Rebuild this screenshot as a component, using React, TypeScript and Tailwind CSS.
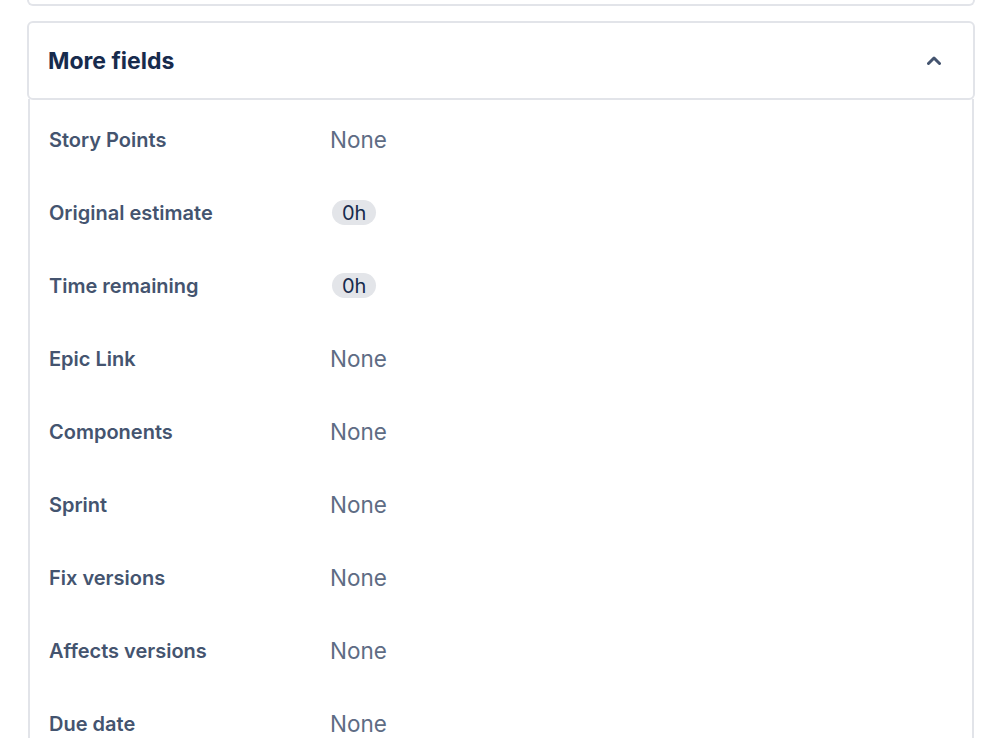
import React from 'react';

type Field = { label: string; value: string; badge?: boolean };

const fields: Field[] = [
	{ label: 'Story Points', value: 'None' },
	{ label: 'Original estimate', value: '0h', badge: true },
	{ label: 'Time remaining', value: '0h', badge: true },
	{ label: 'Epic Link', value: 'None' },
	{ label: 'Components', value: 'None' },
	{ label: 'Sprint', value: 'None' },
	{ label: 'Fix versions', value: 'None' },
	{ label: 'Affects versions', value: 'None' },
	{ label: 'Due date', value: 'None' },
];

function FieldRow({ label, value, badge }: Field) {
	return (
		<div className="flex items-center h-[73px] px-[19px]">
			<div className="w-[281px] text-[20px] font-semibold text-[#44546f]">{label}</div>
			{badge ? (
				<span className="ml-[2px] inline-flex items-center justify-center h-[25px] px-[10px] rounded-full bg-[#e3e5e9] text-[20px] text-[#172b4d]">
					{value}
				</span>
			) : (
				<span className="text-[22.5px] text-[#5e6c84]">{value}</span>
			)}
		</div>
	);
}

export default function App() {
	return (
		<div className="min-h-screen bg-white pl-[27px] pr-[23px] overflow-hidden" style={{ fontFamily: 'Inter, "Noto Sans", sans-serif' }}>
			{/* previous card, bottom edge only */}
			<div className="h-[6px] border-2 border-t-0 border-[#e2e4e9] rounded-b-[6px]" />

			{/* More fields header */}
			<div className="mt-[15px] h-[79px] border-2 border-[#e2e4e9] rounded-[6px] flex items-center justify-between pl-[19px] pr-[32px]">
				<h2 className="text-[23px] font-bold text-[#172b4d] pt-[2px]">More fields</h2>
				<svg width="14" height="9" viewBox="0 0 14 9" fill="none">
					<path d="M1.5 7.5 L7 2 L12.5 7.5" stroke="#44546f" strokeWidth="3" strokeLinecap="round" strokeLinejoin="round" />
				</svg>
			</div>

			{/* fields */}
			<div className="-mt-[1px] mx-[1px] border-x-2 border-[#e2e4e9] pt-[4px]">
				{fields.map((f) => (
					<FieldRow key={f.label} {...f} />
				))}
			</div>
		</div>
	);
}
